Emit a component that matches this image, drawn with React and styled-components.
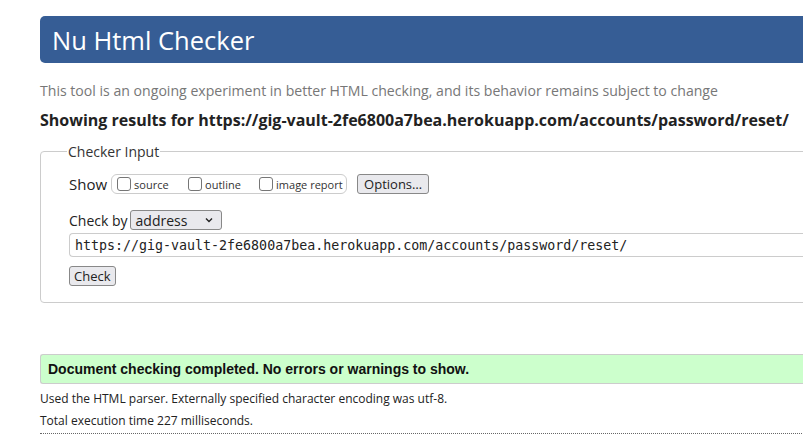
import React from "react";
import styled, { createGlobalStyle } from "styled-components";

const Global = createGlobalStyle`
  html, body { margin: 0; padding: 0; background: #fff; overflow: hidden; }
  body { font-family: "Open Sans", "Noto Sans", sans-serif; color: #222; }
`;

const Page = styled.div`
  width: 900px;
  padding: 16px 0 0 40px;
`;

const Header = styled.h1`
  margin: 0;
  height: 47px;
  display: flex;
  align-items: center;
  padding-left: 12px;
  background: #365d95;
  color: #fff;
  font-weight: 400;
  font-size: 25.5px;
  border-radius: 5px;
`;

const Tagline = styled.p`
  margin: 18px 0 0;
  color: #777;
  font-size: 14.1px;
  line-height: 20px;
`;

const Results = styled.h2`
  margin: 9px 0 0;
  font-size: 16px;
  font-weight: 700;
  line-height: 20px;
  color: #222;
`;

const Fieldset = styled.fieldset`
  margin: 12px 0 0;
  padding: 13px 0 16px 28px;
  border: 1px solid #ccc;
  border-radius: 4px;
`;

const Legend = styled.legend`
  font-size: 14px;
  color: #333;
  padding: 0 1px;
  margin-left: -2px;
`;

const Row = styled.div`
  display: flex;
  align-items: center;
  margin-top: ${(p) => p.$mt || 0}px;
  white-space: nowrap;
  color: #222;
`;

const Label = styled.span`
  font-size: ${(p) => p.$size || 15}px;
  margin-right: ${(p) => p.$gap || 4}px;
`;

const Group = styled.div`
  display: flex;
  align-items: center;
  flex-shrink: 0;
  height: 20px;
  border: 1px solid #ccc;
  border-radius: 6px;
  padding: 0 0 0 5px;
  margin-right: 10px;
  box-sizing: border-box;
  width: 236px;
`;

const Option = styled.label`
  display: flex;
  align-items: center;
  flex-shrink: 0;
  white-space: nowrap;
  font-size: 11px;
  color: #333;
  width: ${(p) => (p.$w ? `${p.$w}px` : "auto")};
`;

const Box = styled.span`
  width: 12px;
  height: 12px;
  border: 1px solid #767676;
  border-radius: 3px;
  margin-right: 3px;
  background: #fff;
`;

const Button = styled.button`
  font-family: inherit;
  font-size: 13px;
  color: #222;
  height: 20px;
  padding: 0 ${(p) => p.$pad || 6}px;
  border: 1px solid #888;
  border-radius: 3px;
  background: #e9e9ed;
  line-height: 18px;
`;

const Select = styled.div`
  display: flex;
  align-items: center;
  justify-content: space-between;
  width: 92px;
  height: 20px;
  box-sizing: border-box;
  border: 1px solid #888;
  border-radius: 3px;
  background: #e9e9ed;
  padding: 0 8px 0 5px;
  font-size: 14px;
  color: #222;
`;

const Url = styled.div`
  margin-top: 3px;
  height: 24px;
  box-sizing: border-box;
  border: 1px solid #ccc;
  border-radius: 4px 0 0 4px;
  border-right: none;
  display: flex;
  align-items: center;
  padding-left: 5px;
  font-family: "DejaVu Sans Mono", monospace;
  font-size: 13.3px;
  color: #222;
`;

const Success = styled.div`
  margin-top: 51px;
  height: 30px;
  box-sizing: border-box;
  background: #ccffcc;
  border: 1px solid #ccc;
  border-right: none;
  border-radius: 3px 0 0 3px;
  display: flex;
  align-items: center;
  padding-left: 7px;
  font-family: "Liberation Sans", Arial, sans-serif;
  font-weight: 700;
  font-size: 14px;
  color: #111;
`;

const Note = styled.p`
  margin: ${(p) => p.$mt}px 0 0;
  font-size: 12px;
  line-height: 16px;
  color: #222;
`;

const Rule = styled.hr`
  margin: 4px 0 0;
  border: none;
  border-top: 1px dotted #666;
`;

export default function App() {
  return (
    <>
      <Global />
      <Page>
        <Header>Nu Html Checker</Header>
        <Tagline>
          This tool is an ongoing experiment in better HTML checking, and its behavior remains subject to change
        </Tagline>
        <Results>
          Showing results for https://gig-vault-2fe6800a7bea.herokuapp.com/accounts/password/reset/
        </Results>
        <Fieldset>
          <Legend>Checker Input</Legend>
          <Row>
            <Label>Show</Label>
            <Group>
              <Option $w={71}><Box />source</Option>
              <Option $w={71}><Box />outline</Option>
              <Option><Box />image report</Option>
            </Group>
            <Button>Options…</Button>
          </Row>
          <Row $mt={16}>
            <Label $size={14} $gap={2}>Check by</Label>
            <Select>
              address
              <svg width="8" height="6" viewBox="0 0 8 6">
                <path d="M1 1.5 L4 4.5 L7 1.5" fill="none" stroke="#222" strokeWidth="1.4" />
              </svg>
            </Select>
          </Row>
          <Url>https://gig-vault-2fe6800a7bea.herokuapp.com/accounts/password/reset/</Url>
          <Row $mt={9}>
            <Button $pad={4}>Check</Button>
          </Row>
        </Fieldset>
        <Success>Document checking completed. No errors or warnings to show.</Success>
        <Note $mt={7}>Used the HTML parser. Externally specified character encoding was utf-8.</Note>
        <Note $mt={6}>Total execution time 227 milliseconds.</Note>
        <Rule />
      </Page>
    </>
  );
}
